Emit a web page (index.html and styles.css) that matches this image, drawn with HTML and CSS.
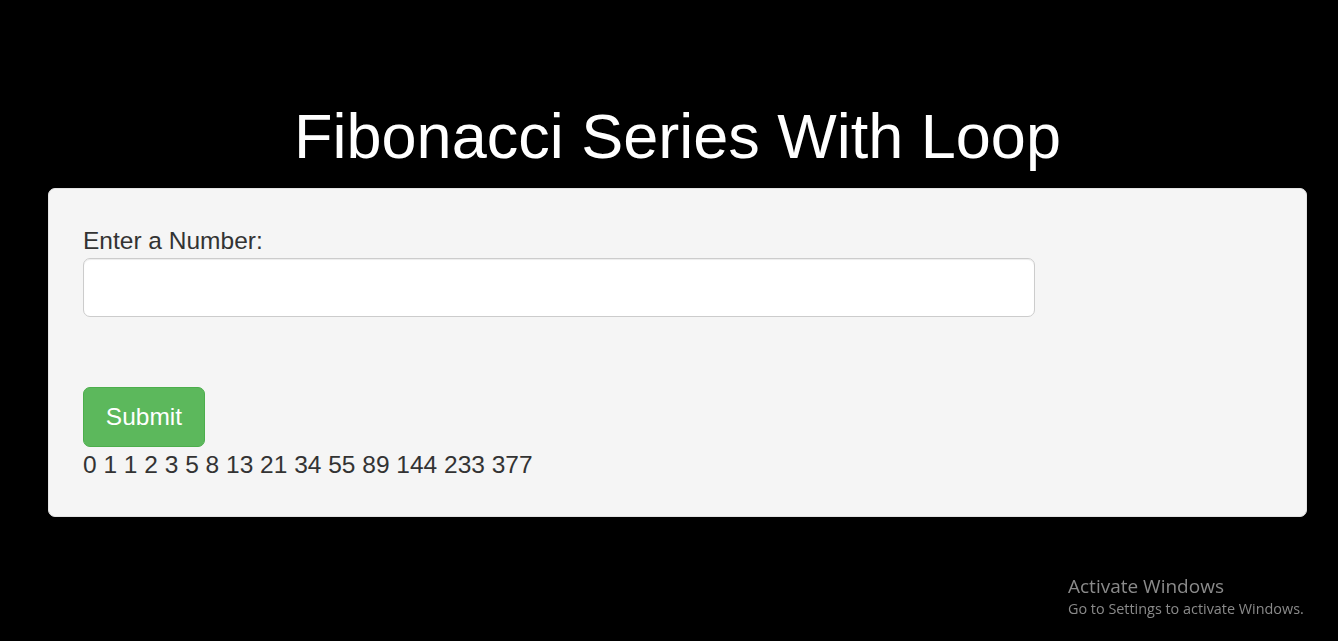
FILE: index.html
```html
<!DOCTYPE html>
<html lang="en">
<head>
    <meta charset="UTF-8">
    <meta name="viewport" content="width=device-width, initial-scale=1.0">
    <title>Fibonacci Series With Loop</title>
    <link rel="stylesheet" href="styles.css">
</head>
<body>

    <div class="page">
        <h1 class="title">Fibonacci Series With Loop</h1>

        <div class="well">
            <label for="num">Enter a Number:</label>
            <input type="number" id="num" class="form-control">
            <button class="btn-success" onclick="fibonacci()">Submit</button>
            <p id="result" class="result">0 1 1 2 3 5 8 13 21 34 55 89 144 233 377</p>
        </div>
    </div>

    <div class="activate">
        <div class="activate-title">Activate Windows</div>
        <div class="activate-sub">Go to Settings to activate Windows.</div>
    </div>

    <script>
        function fibonacci() {
            let n = parseInt(document.getElementById("num").value);
            let out = document.getElementById("result");
            if (isNaN(n)) {
                return;
            }
            let a = 0, b = 1, list = [];
            while (a <= n) {
                list.push(a);
                let t = a + b;
                a = b;
                b = t;
            }
            out.textContent = list.join(" ");
        }
    </script>

</body>
</html>
```

FILE: styles.css
```css
body {
    margin: 0;
    background-color: #000;
    font-family: "Liberation Sans", Arial, sans-serif;
    font-size: 24.5px;
    line-height: 35px;
    color: #333;
}

.page {
    padding: 102px 31px 0 48px;
}

.title {
    margin: 0 0 17px;
    text-align: center;
    color: #fff;
    font-size: 63px;
    font-weight: normal;
    line-height: 69px;
}

.well {
    background: #f5f5f5;
    border: 1px solid #e3e3e3;
    border-radius: 7px;
    padding: 34px 34px 34px;
}

label {
    display: block;
}

.form-control {
    display: block;
    width: 952px;
    height: 59px;
    margin: 0 0 70px;
    padding: 10px 21px;
    border: 1px solid #ccc;
    border-radius: 7px;
    background: #fff;
    box-sizing: border-box;
    box-shadow: inset 0 1px 1px rgba(0, 0, 0, 0.075);
    font-family: inherit;
    font-size: 24.5px;
}

.btn-success {
    display: block;
    width: 122px;
    height: 60px;
    padding: 0;
    background: #5cb85c;
    border: 1px solid #4cae4c;
    border-radius: 7px;
    color: #fff;
    font-family: inherit;
    font-size: 24.5px;
    cursor: pointer;
}

.btn-success:hover {
    background: #449d44;
}

.result {
    margin: 0;
}

/* windows watermark */
.activate {
    position: fixed;
    left: 1068px;
    top: 574px;
    color: #8a8a8a;
    font-family: "Open Sans", "Noto Sans", sans-serif;
}

.activate-title {
    font-size: 19px;
    line-height: 25px;
}

.activate-sub {
    font-size: 14.4px;
    line-height: 20px;
}
```
